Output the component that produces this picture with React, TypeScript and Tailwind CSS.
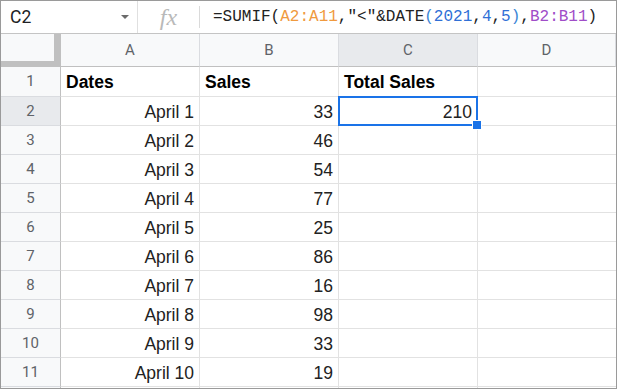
import React from "react";

const rows: [string, string][] = [
  ["April 1", "33"],
  ["April 2", "46"],
  ["April 3", "54"],
  ["April 4", "77"],
  ["April 5", "25"],
  ["April 6", "86"],
  ["April 7", "16"],
  ["April 8", "98"],
  ["April 9", "33"],
  ["April 10", "19"],
];

const cell =
  "w-[139px] shrink-0 border-r border-b border-[#e2e2e2] px-[5px] pt-[1px] leading-[28px] text-[17.5px] text-[#222] whitespace-nowrap";

export default function App() {
  return (
    <div
      className="w-[617px] h-[389px] border border-[#9a9a9a] bg-white overflow-hidden flex flex-col"
      style={{ fontFamily: '"Liberation Sans", Arial, sans-serif' }}
    >
      {/* formula bar */}
      <div className="h-[33px] shrink-0 flex items-center border-b border-[#c4c4c4]">
        <div className="w-[137px] h-full flex items-center justify-between pl-[9px] pr-[8px] border-r border-[#e0e0e0]">
          <span className="text-[17.5px] text-[#202124]" style={{ fontFamily: "Roboto, sans-serif" }}>
            C2
          </span>
          <svg width="8" height="4" viewBox="0 0 8 4">
            <path d="M0 0 L8 0 L4 4 Z" fill="#6b6b6b" />
          </svg>
        </div>
        <div className="w-[61px] h-full flex items-center justify-center">
          <span
            className="italic text-[24px] text-[#b9b9b9] leading-none"
            style={{ fontFamily: '"Liberation Serif", serif' }}
          >
            fx
          </span>
        </div>
        <div className="w-px h-[22px] bg-[#dadada]" />
        <div
          className="pl-[13px] text-[16px] text-[#222] whitespace-pre"
          style={{ fontFamily: '"Liberation Mono", monospace' }}
        >
          =SUMIF(<span className="text-[#f09a3e]">A2:A11</span>,"&lt;"&amp;DATE
          <span className="text-[#3b86d6]">(</span>
          <span className="text-[#2f6fd6]">2021</span>,<span className="text-[#2f6fd6]">4</span>,
          <span className="text-[#2f6fd6]">5</span>
          <span className="text-[#3b86d6]">)</span>,<span className="text-[#a04dc8]">B2:B11</span>)
        </div>
      </div>

      {/* column headers */}
      <div className="h-[33px] shrink-0 flex text-[15px] text-[#5f6368]" style={{ fontFamily: "Roboto, sans-serif" }}>
        <div className="w-[60px] shrink-0 bg-[#f8f9fa] border-r-[7px] border-b-[6px] border-[#c0c0c0]" />
        {["A", "B", "C", "D"].map((c, i) => (
          <div
            key={c}
            className={`${i === 3 ? "flex-1" : "w-[139px] shrink-0"} flex items-center justify-center pt-[1px] border-r border-b border-r-[#dadce0] border-b-[#c0c0c0] ${
              c === "C" ? "bg-[#e8eaed]" : "bg-[#f8f9fa]"
            }`}
          >
            {c}
          </div>
        ))}
      </div>

      {/* row 1 */}
      <div className="h-[30px] shrink-0 flex">
        <div
          className="w-[60px] shrink-0 bg-[#f8f9fa] border-r border-b border-r-[#c0c0c0] border-b-[#dadce0] flex items-center justify-center text-[15px] text-[#5f6368]"
          style={{ fontFamily: "Roboto, sans-serif" }}
        >
          1
        </div>
        <div className={`${cell} font-bold text-black`}>Dates</div>
        <div className={`${cell} font-bold text-black`}>Sales</div>
        <div className={`${cell} font-bold text-black`}>Total Sales</div>
        <div className="flex-1 border-b border-[#e2e2e2]" />
      </div>

      {rows.map(([d, s], i) => (
        <div key={i} className="h-[29px] shrink-0 flex">
          <div
            className={`w-[60px] shrink-0 border-r border-b border-r-[#c0c0c0] border-b-[#dadce0] flex items-center justify-center text-[15px] text-[#5f6368] ${
              i === 0 ? "bg-[#e8eaed]" : "bg-[#f8f9fa]"
            }`}
            style={{ fontFamily: "Roboto, sans-serif" }}
          >
            {i + 2}
          </div>
          <div className={`${cell} text-right`}>{d}</div>
          <div className={`${cell} text-right`}>{s}</div>
          <div className={`${cell} text-right relative`}>
            {i === 0 && (
              <>
                <span>210</span>
                <div className="absolute left-[-1px] top-[-1px] right-[-1px] bottom-[-1px] border-2 border-[#1a73e8] pointer-events-none" />
                <div className="absolute right-[-5px] bottom-[-5px] w-[8px] h-[8px] bg-[#1a73e8] border border-white box-content z-10" />
              </>
            )}
          </div>
          <div className="flex-1 border-b border-[#e2e2e2]" />
        </div>
      ))}

      {/* partial row 12 */}
      <div className="h-[29px] shrink-0 flex">
        <div className="w-[60px] shrink-0 bg-[#f8f9fa] border-r border-[#c0c0c0]" />
        <div className="w-[139px] shrink-0 border-r border-[#e2e2e2]" />
        <div className="w-[139px] shrink-0 border-r border-[#e2e2e2]" />
        <div className="w-[139px] shrink-0 border-r border-[#e2e2e2]" />
        <div className="flex-1" />
      </div>
    </div>
  );
}
